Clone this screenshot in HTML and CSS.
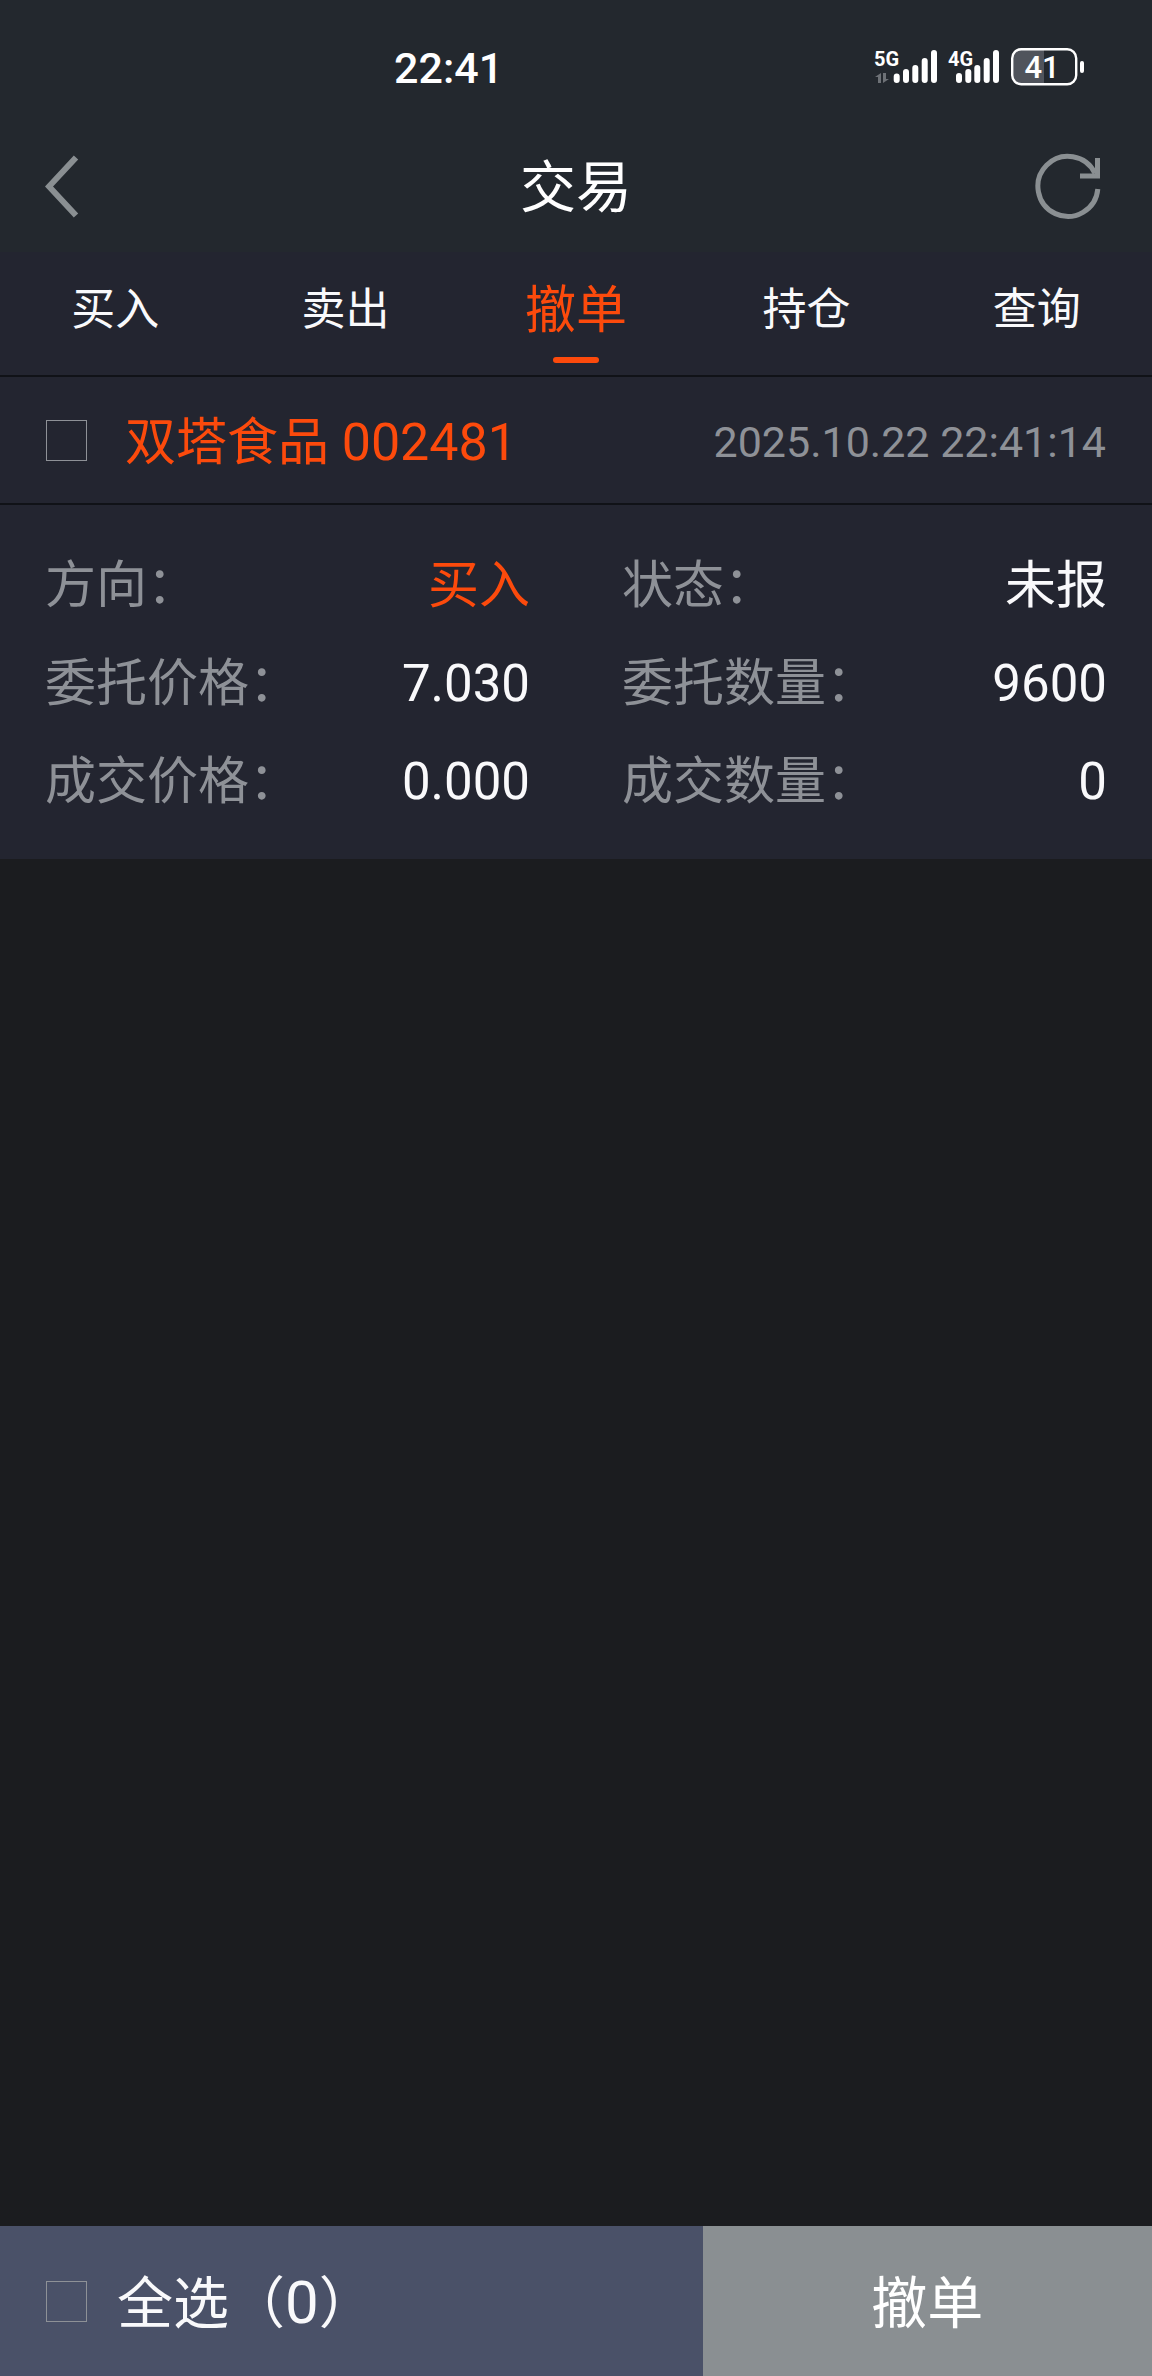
FILE: index.html
```
<!DOCTYPE html>
<html lang="zh-CN">
<head>
  <meta charset="UTF-8">
  <meta name="viewport" content="width=device-width, initial-scale=1.0">
  <title>交易</title>
  <link rel="stylesheet" href="styles.css">
</head>
<body>

  <!-- Status bar -->
  <div class="status-bar">
    <span class="time">22:41</span>
    <svg class="status-icons" width="210" height="40" viewBox="0 0 210 40">
      <!-- 5G signal -->
      <text x="0" y="18" class="net">5G</text>
      <path d="M7 25v10h-3v-6h-3zM9 25h3v6h3l-6 4z" fill="#6d7176"/>
      <g class="bars">
        <path d="M22.700 28.500V32M32 24V32M41.300 20V32M50.700 13V32M60 5V32"/>
      </g>
      <!-- 4G signal -->
      <text x="74" y="18" class="net">4G</text>
      <g class="bars">
        <path d="M85 28V32M94.300 24V32M103.300 20V32M112.700 13V32M122 5V32"/>
      </g>
      <!-- Battery -->
      <path d="M147 1.500H170V36.500H147A9 9 0 0 1 138 27.500V10.500A9 9 0 0 1 147 1.500Z" fill="#50545c"/>
      <rect x="138.200" y="1.200" width="64" height="35" rx="9" fill="none" stroke="#fff" stroke-width="2.400"/>
      <rect x="206" y="13" width="4" height="12" rx="2" fill="#fff"/>
      <text x="168" y="30" text-anchor="middle" class="level">41</text>
    </svg>
  </div>

  <!-- Title bar -->
  <header class="header">
    <button type="button" class="icon-btn" aria-label="返回">
      <svg width="72" height="72" viewBox="0 0 72 72">
        <path d="M31 7.500L4 36.500L31 65.500" stroke-width="6"/>
      </svg>
    </button>
    <h1>交易</h1>
    <button type="button" class="icon-btn" aria-label="刷新">
      <svg width="72" height="72" viewBox="0 0 72 72">
        <path d="M62.800 39A30 30 0 1 1 60 23.500"/>
        <path d="M62.500 8V26H45"/>
      </svg>
    </button>
  </header>

  <nav class="tabs">
    <a href="#buy">买入</a>
    <a href="#sell">卖出</a>
    <a href="#cancel" class="active">撤单</a>
    <a href="#hold">持仓</a>
    <a href="#query">查询</a>
  </nav>

  <!-- Order list -->
  <main>
    <section class="order">
      <div class="order-head">
        <input type="checkbox" id="order-1">
        <label for="order-1">双塔食品 <span class="code">002481</span></label>
        <time datetime="2025-10-22T22:41:14">2025.10.22 22:41:14</time>
      </div>
      <dl class="order-info">
        <div><dt>方向：</dt><dd class="buy">买入</dd></div>
        <div><dt>状态：</dt><dd>未报</dd></div>
        <div><dt>委托价格：</dt><dd>7.030</dd></div>
        <div><dt>委托数量：</dt><dd>9600</dd></div>
        <div><dt>成交价格：</dt><dd>0.000</dd></div>
        <div><dt>成交数量：</dt><dd>0</dd></div>
      </dl>
    </section>
  </main>

  <!-- Bottom bar -->
  <footer class="footer">
    <div class="select-all">
      <input type="checkbox" id="check-all">
      <label for="check-all">全选（<span class="count">0</span>）</label>
    </div>
    <button type="button" class="cancel-btn">撤单</button>
  </footer>

</body>
</html>
```
FILE: styles.css
```
* {
  box-sizing: border-box;
}

body {
  margin: 0;
  min-height: 100vh;
  display: flex;
  flex-direction: column;
  background-color: #1b1c1f;
  color: #f9f9fb;
  font-family: Roboto, "Noto Sans CJK SC", sans-serif;
}

/* Status bar */
.status-bar {
  height: 120px;
  padding: 16px 68px 0 394px;
  display: flex;
  justify-content: space-between;
  align-items: center;
  background-color: #23282e;
}

.time {
  font-size: 43px;
  font-weight: 500;
  color: #fff;
}

.net,
.level {
  fill: #fff;
  font-size: 20px;
  font-weight: 700;
}

.level {
  font-size: 31px;
  font-weight: 500;
}

.bars path {
  fill: none;
  stroke: #fff;
  stroke-width: 6;
  stroke-linecap: round;
}

/* Title bar */
.header {
  height: 132px;
  padding: 0 45px;
  display: flex;
  justify-content: space-between;
  align-items: center;
  background-color: #23282e;
}

.header h1 {
  margin: 0;
  padding-bottom: 8px;
  font-size: 56px;
  font-weight: 400;
  color: #fff;
}

.icon-btn {
  width: 72px;
  height: 72px;
  padding: 0;
  border: none;
  background: none;
  cursor: pointer;
}

.icon-btn svg {
  display: block;
  fill: none;
  stroke: #8a8f92;
  stroke-width: 5;
}

/* Tabs */
.tabs {
  display: grid;
  grid-template-columns: repeat(5, 1fr);
  background-color: #232530;
  border-bottom: 2px solid #101217;
}

.tabs a {
  position: relative;
  height: 123px;
  padding-bottom: 16px;
  display: flex;
  justify-content: center;
  align-items: center;
  font-size: 44px;
  color: #f9f9fb;
  text-decoration: none;
}

.tabs a.active {
  font-size: 51px;
  color: #fc4a0c;
}

.tabs a.active::after {
  content: "";
  position: absolute;
  bottom: 12px;
  width: 46px;
  height: 6px;
  border-radius: 3px;
  background-color: #fc4a0c;
}

/* Orders */
main {
  flex: 1;
}

.order {
  background-color: #232530;
}

.order-head {
  height: 128px;
  padding: 0 46px;
  display: flex;
  align-items: center;
  border-bottom: 2px solid #101217;
}

input[type="checkbox"] {
  appearance: none;
  width: 41px;
  height: 41px;
  margin: 0;
  border: 1px solid #8e9197;
  border-radius: 0;
}

input[type="checkbox"]:checked {
  background-color: #fc4a0c;
}

.order-head label {
  margin-left: 38px;
  padding-bottom: 4px;
  font-size: 51px;
  color: #fc4a0c;
}

.code {
  font-size: 52px;
}

.order-head time {
  margin-left: auto;
  padding-top: 4px;
  font-size: 43px;
  color: #8e9197;
}

.order-info {
  margin: 0;
  padding: 32px 45px 28px;
  display: grid;
  grid-template-columns: 1fr 1fr;
  column-gap: 92px;
}

.order-info div {
  height: 98px;
  display: flex;
  justify-content: space-between;
  align-items: baseline;
  font-size: 51px;
  line-height: 98px;
}

.order-info dt {
  color: #8e9197;
}

.order-info dd {
  margin: 0;
}

.order-info .buy {
  color: #fc4a0c;
}

/* Bottom bar */
.footer {
  height: 150px;
  display: flex;
  font-size: 56px;
}

.select-all {
  flex: 1;
  padding-left: 46px;
  display: flex;
  align-items: center;
  background-color: #4a5168;
}

.select-all label {
  margin-left: 30px;
  padding-bottom: 6px;
}

.count {
  font-size: 60px;
}

.cancel-btn {
  width: 39%;
  padding: 0 0 6px;
  border: none;
  background-color: #8a8f92;
  color: #fff;
  font: inherit;
  cursor: pointer;
}
```
